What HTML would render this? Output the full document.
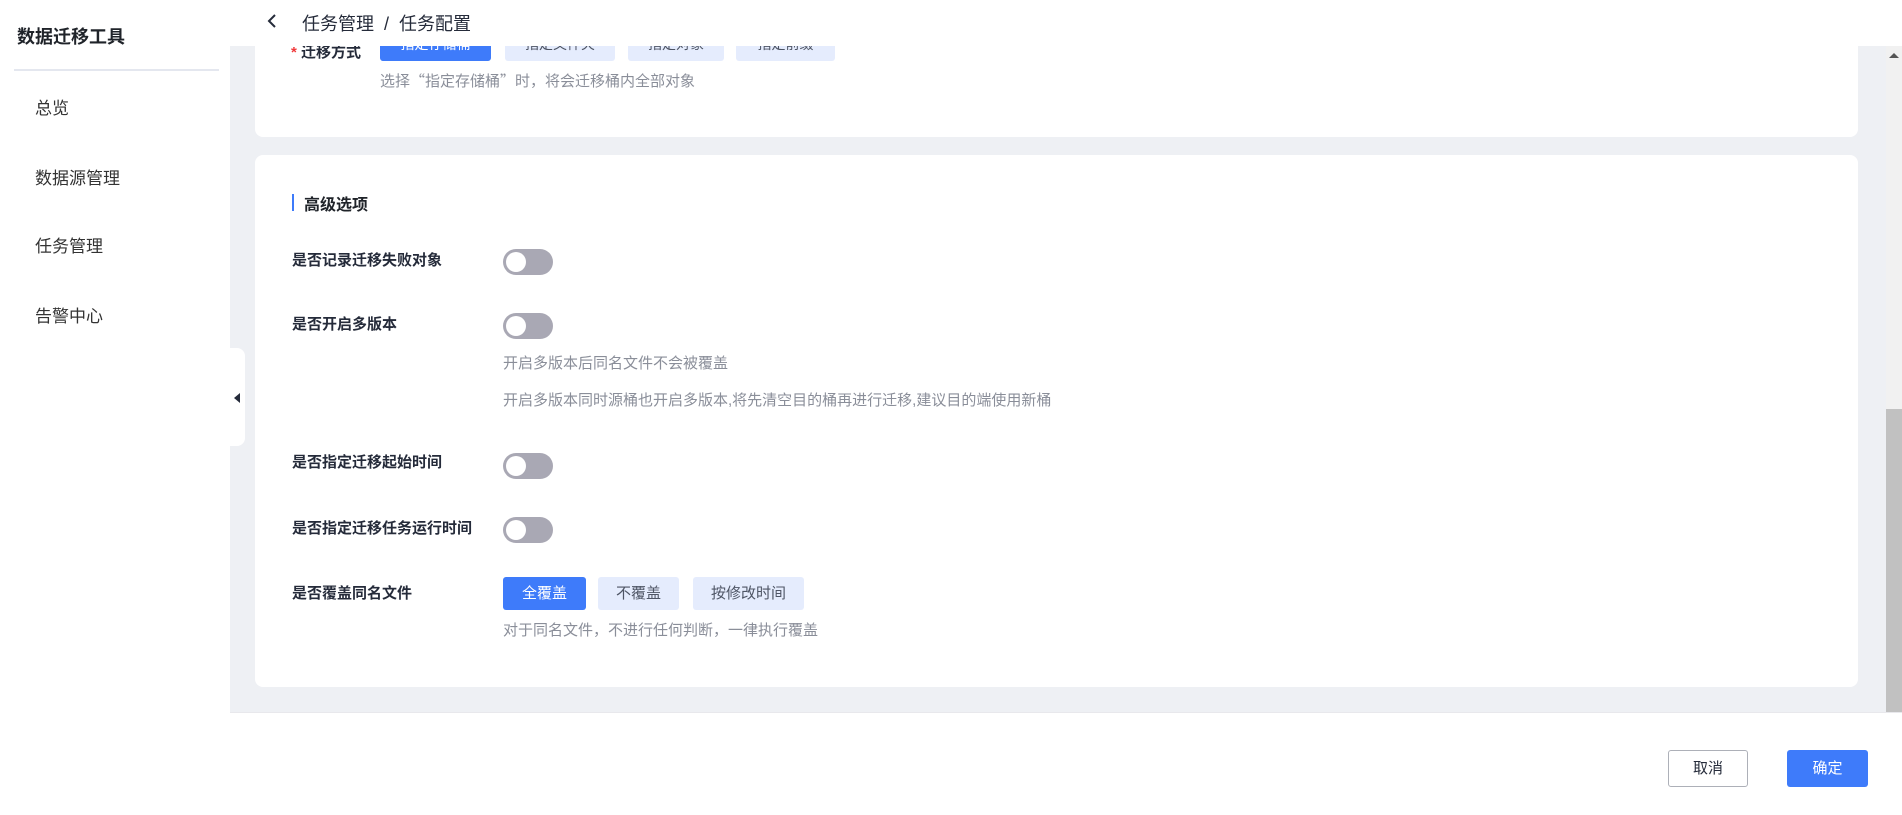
<!DOCTYPE html>
<html><head><meta charset="utf-8"><style>
*{box-sizing:border-box;margin:0;padding:0}
body{width:1902px;height:815px;overflow:hidden;position:relative;background:#fff;font-family:"Liberation Sans","Noto Sans CJK SC",sans-serif;color:#252b3a}
.abs{position:absolute}
.side{left:0;top:0;width:230px;height:815px;background:#fff}
.title{left:17px;top:23px;font-size:18px;font-weight:bold;color:#1f2329}
.div{left:14px;top:69px;width:205px;height:2px;background:#e4e7ef}
.menu{left:35px;font-size:17px;color:#333}
.main{left:230px;top:0;width:1656px;height:712px;background:#eef0f4}
.sb{left:1886px;top:46px;width:16px;height:666px;background:#f1f1f1}
.thumb{left:1886px;top:409px;width:16px;height:303px;background:#c1c1c1}
.hdr{left:230px;top:0;width:1672px;height:46px;background:#fff}
.card{background:#fff;border-radius:8px}
.lbl{left:292px;font-size:15px;font-weight:bold;color:#252b3a;line-height:20px}
.tg{left:503px;width:50px;height:26px;border-radius:13px;background:#a9a8b4}
.tg::after{content:"";position:absolute;left:3px;top:3px;width:20px;height:20px;border-radius:50%;background:#fff}
.hint{left:503px;font-size:15px;color:#8a8e99;line-height:20px}
.btn{height:33px;line-height:33px;text-align:center;font-size:14px;border-radius:3px;background:#e5ecfd;color:#4e5565}
.blue{background:#3e7bfa;color:#fff}
</style></head><body>
<div class="abs main"></div>
<div class="abs card" style="left:255px;top:10px;width:1603px;height:127px"></div>
<div class="abs" style="left:291px;top:41px;font-size:15px;font-weight:bold"><span style="color:#f0383a">*</span> 迁移方式</div>
<div class="abs btn blue" style="left:380px;top:28px;width:111px">指定存储桶</div>
<div class="abs btn" style="left:505px;top:28px;width:110px">指定文件夹</div>
<div class="abs btn" style="left:628px;top:28px;width:96px">指定对象</div>
<div class="abs btn" style="left:736px;top:28px;width:99px">指定前缀</div>
<div class="abs hint" style="left:380px;top:71px;font-family:'Noto Sans CJK SC',sans-serif">选择“指定存储桶”时，将会迁移桶内全部对象</div>

<div class="abs card" style="left:255px;top:155px;width:1603px;height:532px"></div>
<div class="abs" style="left:292px;top:194px;width:2px;height:17px;background:#3e7bfa"></div>
<div class="abs" style="left:304px;top:191px;font-size:16px;font-weight:bold;color:#1f2329">高级选项</div>

<div class="abs lbl" style="top:251px">是否记录迁移失败对象</div>
<div class="abs tg" style="top:249px"></div>
<div class="abs lbl" style="top:315px">是否开启多版本</div>
<div class="abs tg" style="top:313px"></div>
<div class="abs hint" style="top:354px">开启多版本后同名文件不会被覆盖</div>
<div class="abs hint" style="top:391px">开启多版本同时源桶也开启多版本,将先清空目的桶再进行迁移,建议目的端使用新桶</div>
<div class="abs lbl" style="top:453px">是否指定迁移起始时间</div>
<div class="abs tg" style="top:453px"></div>
<div class="abs lbl" style="top:519px">是否指定迁移任务运行时间</div>
<div class="abs tg" style="top:517px"></div>
<div class="abs lbl" style="top:584px">是否覆盖同名文件</div>
<div class="abs btn blue" style="left:503px;top:577px;width:83px;font-size:15px">全覆盖</div>
<div class="abs btn" style="left:598px;top:577px;width:81px;font-size:15px">不覆盖</div>
<div class="abs btn" style="left:693px;top:577px;width:111px;font-size:15px">按修改时间</div>
<div class="abs hint" style="top:621px">对于同名文件，不进行任何判断，一律执行覆盖</div>

<div class="abs sb"></div>
<div class="abs thumb"></div>
<div class="abs" style="left:1889px;top:53px;width:0;height:0;border-left:5px solid transparent;border-right:5px solid transparent;border-bottom:5px solid #555"></div>

<div class="abs hdr"></div>
<svg class="abs" style="left:266px;top:13px" width="12" height="16"><path d="M9 2 L3 8 L9 14" stroke="#252b3a" stroke-width="2" fill="none"/></svg>
<div class="abs" style="left:302px;top:10px;font-size:18px;color:#252b3a">任务管理 &nbsp;/ &nbsp;任务配置</div>

<div class="abs" style="left:230px;top:712px;width:1672px;height:103px;background:#fff;border-top:1px solid #e8e8ec"></div>
<div class="abs btn" style="left:1668px;top:750px;width:80px;height:37px;line-height:35px;background:#fff;border:1px solid #adb0b8;color:#252b3a;font-size:15px">取消</div>
<div class="abs btn blue" style="left:1787px;top:750px;width:81px;height:37px;line-height:37px;font-size:15px">确定</div>

<div class="abs side"></div>
<div class="abs title">数据迁移工具</div>
<div class="abs div"></div>
<div class="abs menu" style="top:94px">总览</div>
<div class="abs menu" style="top:164px">数据源管理</div>
<div class="abs menu" style="top:232px">任务管理</div>
<div class="abs menu" style="top:302px">告警中心</div>
<div class="abs" style="left:230px;top:348px;width:15px;height:98px;background:#fff;border-radius:0 8px 8px 0"></div>
<div class="abs" style="left:234px;top:393px;width:0;height:0;border-top:5px solid transparent;border-bottom:5px solid transparent;border-right:6px solid #252b3a"></div>
</body></html>
